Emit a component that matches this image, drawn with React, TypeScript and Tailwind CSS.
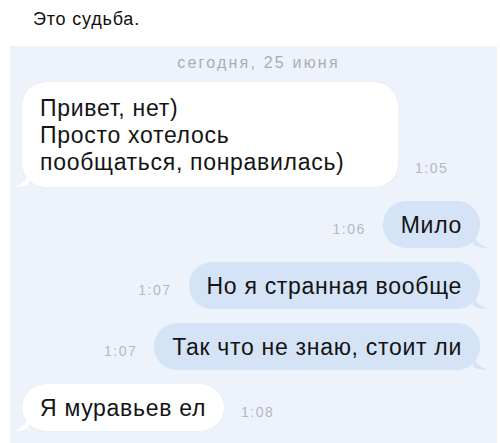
import React from 'react';

type Msg = { text: string[]; time: string; out: boolean; wide?: boolean };

const msgs: Msg[] = [
  { text: ['Привет, нет)', 'Просто хотелось', 'пообщаться, понравилась)'], time: '1:05', out: false, wide: true },
  { text: ['Мило'], time: '1:06', out: true },
  { text: ['Но я странная вообще'], time: '1:07', out: true },
  { text: ['Так что не знаю, стоит ли'], time: '1:07', out: true },
  { text: ['Я муравьев ел'], time: '1:08', out: false },
];

function Tail({ out }: { out: boolean }) {
  if (out) {
    return (
      <svg width="16" height="14" viewBox="0 0 16 14" className="absolute -right-[9px] bottom-0">
        <path d="M0 0 C2 6 6 11 15 13.5 C9 14 4 13 0 11 Z" fill="#d5e3f6" />
      </svg>
    );
  }
  return (
    <svg width="16" height="14" viewBox="0 0 16 14" className="absolute -left-[9px] bottom-0">
      <path d="M16 0 C14 6 10 11 1 13.5 C7 14 12 13 16 11 Z" fill="#ffffff" />
    </svg>
  );
}

function Bubble({ m }: { m: Msg }) {
  const time = <span className="text-[14px] leading-[16px] tracking-[1.5px] text-[#b4b9c2] mb-[11px]">{m.time}</span>;
  return (
    <div className={`flex items-end gap-[17px] ${m.out ? 'justify-end pr-[17px]' : 'pl-[12px]'}`}>
      {m.out && time}
      <div
        className={`relative rounded-[23px] px-[18px] text-[23px] leading-[27px] tracking-[0.7px] text-[#141414] ${
          m.wide ? 'w-[376px] pt-[13px] pb-[11px]' : 'pt-[11px] pb-[9px]'
        } ${m.out ? 'bg-[#d5e3f6]' : 'bg-white shadow-[0_0_1px_rgba(0,0,0,0.15)]'}`}
      >
        {m.text.map((t, i) => (
          <div key={i}>{t}</div>
        ))}
        <Tail out={m.out} />
      </div>
      {!m.out && time}
    </div>
  );
}

export default function App() {
  return (
    <div className="w-[500px] h-[443px] bg-white overflow-hidden font-['Liberation_Sans',Arial,sans-serif]">
      <div className="pl-[33px] pt-[9px] h-[46px] text-[18px] leading-[20px] tracking-[0.8px] text-[#111]">Это судьба.</div>
      <div className="ml-[10px] mr-[3px] h-[397px] bg-[#eef2fb] pt-[8px]">
        <div className="text-center text-[16px] text-[#a9adb4] leading-[18px] tracking-[2.2px] pl-[10px]">сегодня, 25 июня</div>
        <div className="flex flex-col gap-[14px] mt-[10px]">
          {msgs.map((m, i) => (
            <Bubble key={i} m={m} />
          ))}
        </div>
      </div>
    </div>
  );
}
